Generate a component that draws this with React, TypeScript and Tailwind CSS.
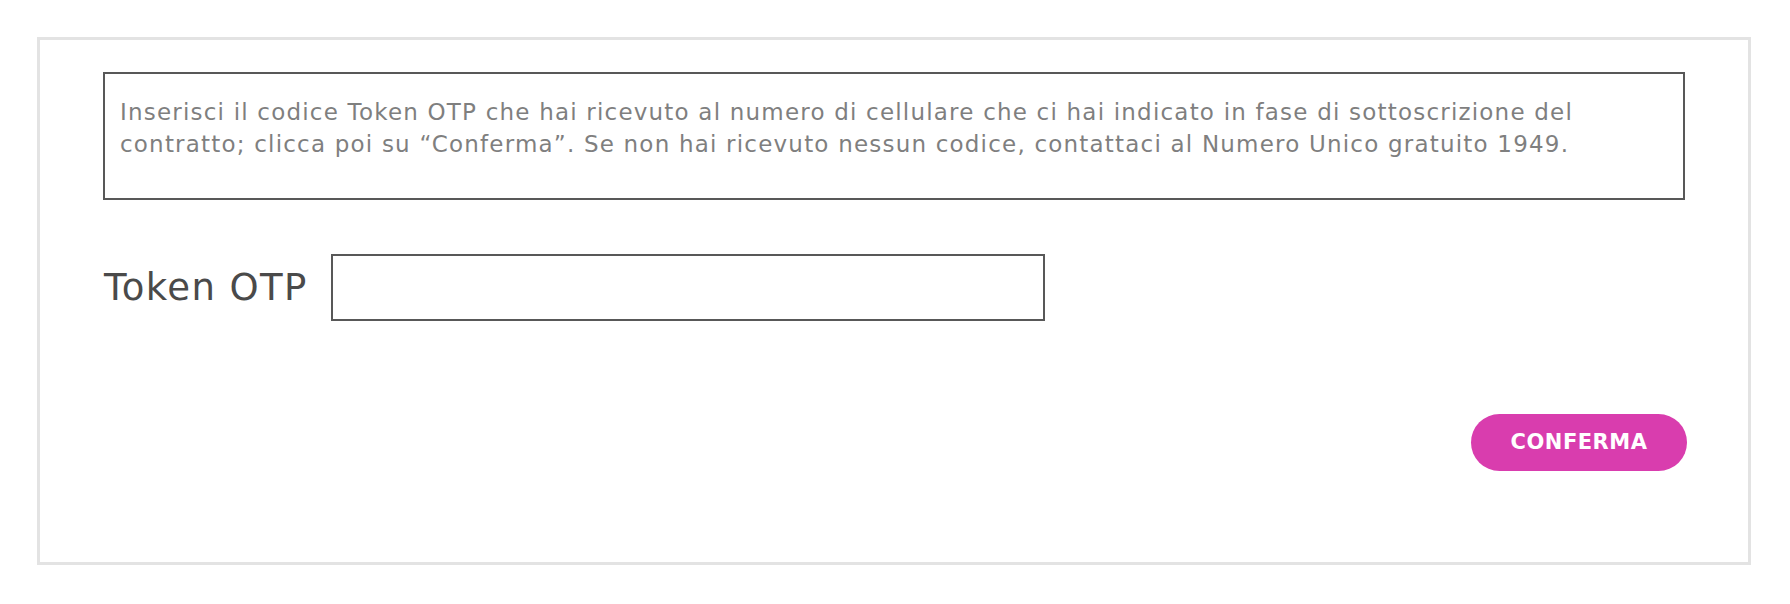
import React from "react";

const body = { fontFamily: "'DejaVu Sans', 'Open Sans', 'Liberation Sans', sans-serif" };

export default function App() {
  return (
    <div className="w-[1790px] h-[604px] bg-white pt-[37px] pl-[37px]" style={body}>
      <div className="w-[1714px] h-[528px] border-[3px] border-[#e3e3e3] px-[63px] pt-[32px]">
        {/* Instructions */}
        <div className="h-[128px] border-2 border-[#585858] pl-[15px] pt-[22px]">
          <p className="text-[23px] leading-[32px] tracking-[1.2px] text-[#7f7f7f]">
            Inserisci il codice Token OTP che hai ricevuto al numero di cellulare che ci hai indicato in fase di sottoscrizione del
            <br />
            contratto; clicca poi su “Conferma”. Se non hai ricevuto nessun codice, contattaci al Numero Unico gratuito 1949.
          </p>
        </div>

        {/* Token field */}
        <div className="mt-[54px] flex items-center">
          <label htmlFor="otp" className="w-[228px] shrink-0 pl-[1px] text-[37px] leading-[40px] tracking-[1.4px] text-[#4a4a4a]">
            Token OTP
          </label>
          <input
            id="otp"
            type="text"
            className="w-[714px] h-[67px] border-2 border-[#585858] bg-white px-3 text-[22px] outline-none"
          />
        </div>

        {/* Submit */}
        <div className="mt-[93px] flex justify-end -mr-[2px]">
          <button
            type="button"
            className="w-[216px] h-[57px] rounded-full bg-[#d93dae] text-white text-[21px] font-bold tracking-[0.5px]"
          >
            CONFERMA
          </button>
        </div>
      </div>
    </div>
  );
}
